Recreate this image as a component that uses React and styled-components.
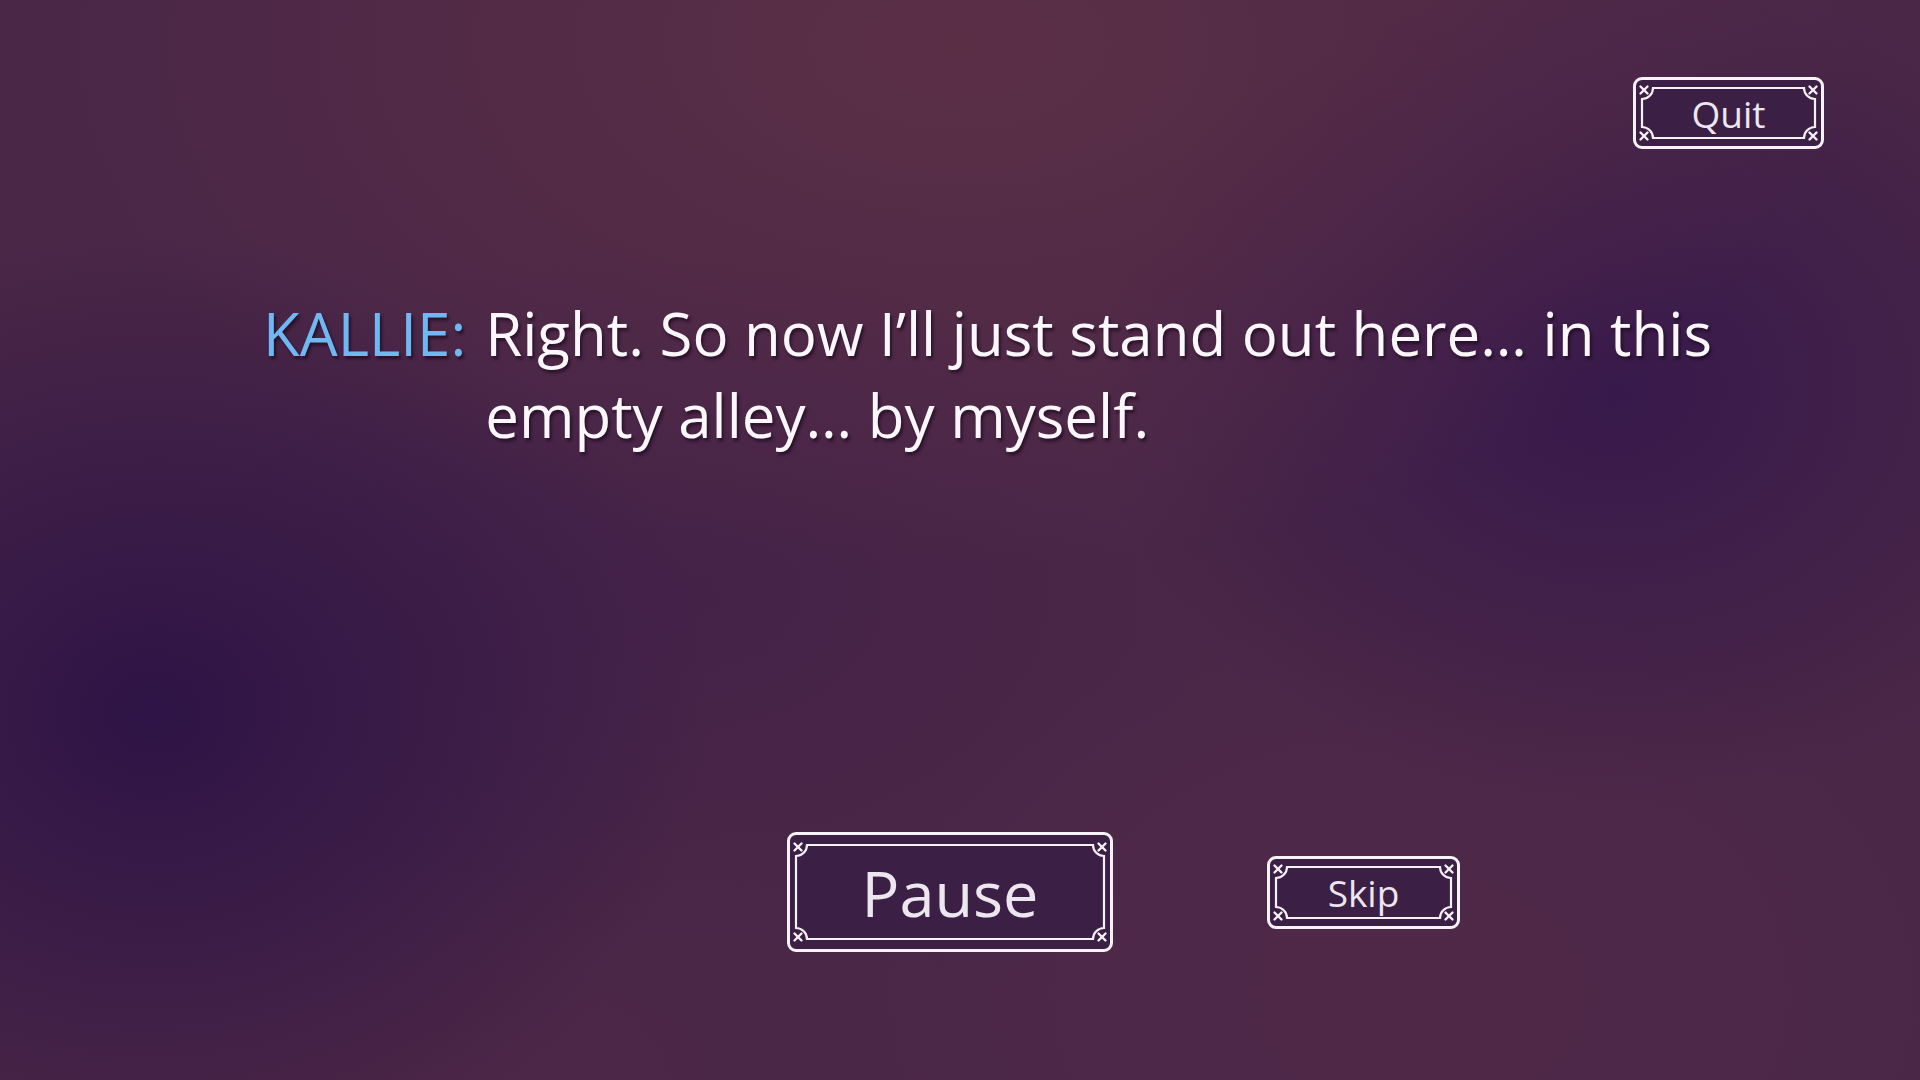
import React from 'react';
import styled, { createGlobalStyle } from 'styled-components';

const GlobalStyle = createGlobalStyle`
  html, body {
    margin: 0;
    padding: 0;
  }
  body {
    font-family: 'Open Sans', 'Noto Sans', sans-serif;
  }
`;

const buttonSizes = {
    quit: { w: 191, h: 72, font: 37, padX: 8, padY: 10 },
    skip: { w: 193, h: 73, font: 37, padX: 8, padY: 10 },
    pause: { w: 326, h: 120, font: 63, padX: 8, padY: 12 },
};

// inner frame with scooped corners and a little cross in each one
function Ornament({ w, h, r = 11 }) {
    const a = 1;
    const R = w - 1;
    const B = h - 1;
    const d = `M ${a + r} ${a} H ${R - r} A ${r} ${r} 0 0 0 ${R} ${a + r} V ${B - r} A ${r} ${r} 0 0 0 ${R - r} ${B} H ${a + r} A ${r} ${r} 0 0 0 ${a} ${B - r} V ${a + r} A ${r} ${r} 0 0 0 ${a + r} ${a} Z`;
    const corners = [[a + 2, a + 2], [R - 2, a + 2], [a + 2, B - 2], [R - 2, B - 2]];
    return (
        <FrameSvg width={w} height={h} viewBox={`0 0 ${w} ${h}`}>
            <path d={d} fill="none" stroke="#f4f0f4" strokeWidth="2.2" />
            {corners.map(([x, y], i) => (
                <g key={i} stroke="#f4f0f4" strokeWidth="2.4" strokeLinecap="round">
                    <line x1={x - 3.5} y1={y - 3.5} x2={x + 3.5} y2={y + 3.5} />
                    <line x1={x + 3.5} y1={y - 3.5} x2={x - 3.5} y2={y + 3.5} />
                </g>
            ))}
        </FrameSvg>
    );
}

function FancyButton({ size, children }) {
    const s = buttonSizes[size];
    return (
        <ButtonBox $w={s.w} $h={s.h} $font={s.font}>
            <FrameHolder $padX={s.padX} $padY={s.padY}>
                <Ornament w={s.w - 2 * s.padX} h={s.h - 2 * s.padY} />
            </FrameHolder>
            <ButtonLabel>{children}</ButtonLabel>
        </ButtonBox>
    );
}

export default function App() {
    return (
        <Scene>
            <GlobalStyle />
            <TopBar>
                <FancyButton size="quit">Quit</FancyButton>
            </TopBar>
            <Dialogue>
                <Speaker>KALLIE:</Speaker>
                <Line>Right. So now I’ll just stand out here… in this empty alley… by myself.</Line>
            </Dialogue>
            <Controls>
                <FancyButton size="pause">Pause</FancyButton>
                <FancyButton size="skip">Skip</FancyButton>
            </Controls>
        </Scene>
    );
}

const Scene = styled.div`
    width: 1920px;
    height: 1080px;
    overflow: hidden;
    display: flex;
    flex-direction: column;
    box-sizing: border-box;
    background-color: #4a2747;
    background-image:
        radial-gradient(ellipse 900px 520px at 50% 4%, rgba(98, 50, 70, 0.7), transparent),
        radial-gradient(ellipse 560px 480px at 8% 66%, rgba(44, 18, 70, 0.95), transparent),
        radial-gradient(ellipse 520px 420px at 84% 36%, rgba(52, 22, 76, 0.85), transparent),
        radial-gradient(ellipse 520px 360px at 36% 55%, rgba(64, 30, 74, 0.55), transparent),
        radial-gradient(ellipse 560px 400px at 74% 92%, rgba(86, 42, 72, 0.5), transparent),
        radial-gradient(ellipse 700px 300px at 20% 100%, rgba(78, 38, 70, 0.5), transparent);
`;

const TopBar = styled.div`
    display: flex;
    justify-content: flex-end;
    padding: 77px 96px 0 0;
`;

const Dialogue = styled.div`
    display: flex;
    align-items: flex-start;
    gap: 19px;
    margin-top: 143px;
    padding-left: 263px;
    font-size: 60px;
    line-height: 82px;
    text-shadow: 2px 3px 3px rgba(28, 10, 30, 0.7);
`;

const Speaker = styled.span`
    color: #6fb8f2;
    white-space: nowrap;
`;

const Line = styled.p`
    margin: 0;
    width: 1260px;
    color: #fbf7fb;
`;

const Controls = styled.div`
    display: flex;
    align-items: center;
    gap: 154px;
    margin-top: 376px;
    padding-left: 787px;
`;

const ButtonBox = styled.button`
    position: relative;
    width: ${p => p.$w}px;
    height: ${p => p.$h}px;
    box-sizing: border-box;
    padding: 0;
    border: 3px solid #f6f2f6;
    border-radius: 9px;
    background: #3b1f45;
    color: #ece6ee;
    font-family: 'Open Sans', 'Noto Sans', sans-serif;
    font-size: ${p => p.$font}px;
    display: flex;
    align-items: center;
    justify-content: center;
    cursor: pointer;
`;

const FrameHolder = styled.div`
    position: absolute;
    top: ${p => p.$padY - 3}px;
    left: ${p => p.$padX - 3}px;
    line-height: 0;
`;

const FrameSvg = styled.svg`
    overflow: visible;
    display: block;
`;

const ButtonLabel = styled.span`
    position: relative;
    line-height: 1;
`;
